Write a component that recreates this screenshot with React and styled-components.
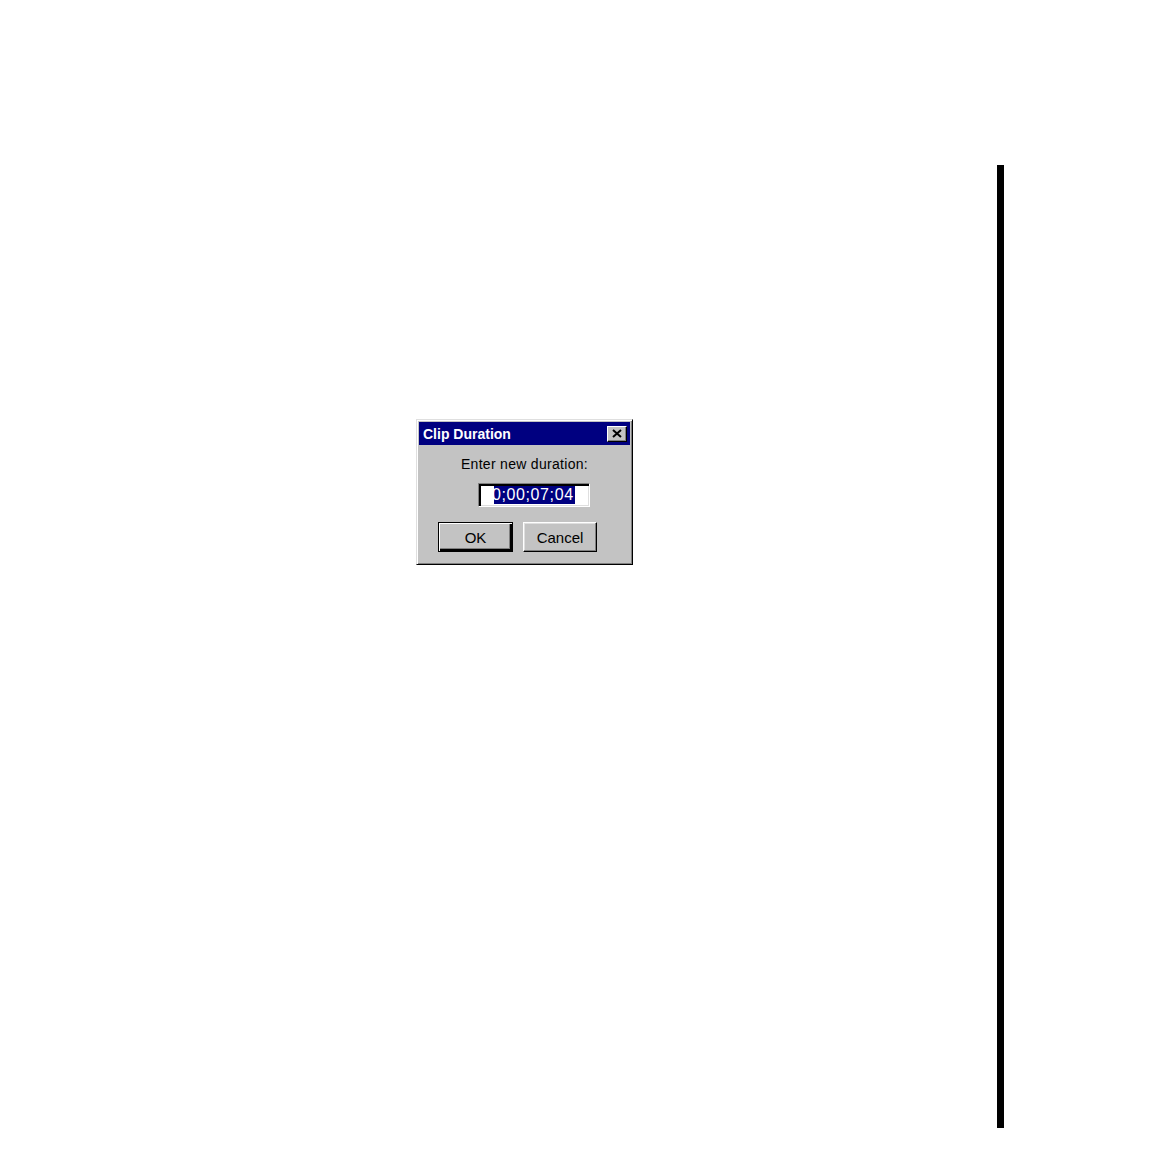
import React from 'react';
import styled, {createGlobalStyle} from 'styled-components';

const GlobalStyle = createGlobalStyle`
    html, body {
        margin: 0;
        padding: 0;
        background: #ffffff;
        font-family: "Liberation Sans", Arial, sans-serif;
    }
`

const Page = styled.div`
    width: 1152px;
    height: 1152px;
    display: flex;
    align-items: flex-start;
    padding-top: 165px;
    box-sizing: border-box;
`

const Content = styled.div`
    width: 997px;
    padding: 254px 0 0 416px;
    box-sizing: border-box;
`

const EdgeBar = styled.div`
    width: 7px;
    height: 963px;
    background: #000000;
`

const Dialog = styled.div`
    width: 217px;
    height: 146px;
    box-sizing: border-box;
    background: #c3c3c3;
    border: 1px solid;
    border-color: #dfdfdf #000000 #000000 #dfdfdf;
    box-shadow: inset 1px 1px 0 #ffffff, inset -1px -1px 0 #808080;
    padding: 2px;
    display: flex;
    flex-direction: column;
`

const TitleBar = styled.div`
    height: 23px;
    background: #000080;
    color: #ffffff;
    font-weight: bold;
    font-size: 14px;
    display: flex;
    align-items: center;
    justify-content: space-between;
    padding: 0 3px 0 4px;
`

const CloseButton = styled.div`
    width: 20px;
    height: 16px;
    box-sizing: border-box;
    background: #c3c3c3;
    border: 1px solid;
    border-color: #ffffff #000000 #000000 #ffffff;
    box-shadow: inset -1px -1px 0 #808080;
    display: flex;
    align-items: center;
    justify-content: center;
`

const Body = styled.div`
    display: flex;
    flex-direction: column;
    padding-top: 10px;
`

const Label = styled.div`
    font-size: 14px;
    letter-spacing: 0.3px;
    color: #000000;
    text-align: center;
    height: 18px;
    line-height: 18px;
`

const Field = styled.div`
    margin: 10px 0 0 59px;
    width: 112px;
    height: 24px;
    box-sizing: border-box;
    background: #ffffff;
    border: 1px solid;
    border-color: #808080 #ffffff #ffffff #808080;
    box-shadow: inset 2px 2px 0 #000000, inset -1px -1px 0 #dfdfdf;
    display: flex;
    align-items: center;
    padding-left: 15px;
`

const FieldClip = styled.div`
    overflow: hidden;
    width: 84px;
    height: 18px;
`

const Selected = styled.span`
    display: inline-block;
    margin-left: -2px;
    padding: 0 1px 0 0;
    height: 18px;
    line-height: 18px;
    background: #000080;
    color: #ffffff;
    font-size: 16px;
    letter-spacing: 0.6px;
`

const ButtonRow = styled.div`
    display: flex;
    gap: 10px;
    margin: 15px 0 0 19px;
`

const Button = styled.div`
    width: ${p => p.$default ? '75px' : '74px'};
    height: 30px;
    box-sizing: border-box;
    background: #c3c3c3;
    border: 1px solid;
    border-color: ${p => p.$default ? '#000000' : '#ffffff #000000 #000000 #ffffff'};
    box-shadow: ${p => p.$default
        ? 'inset 1px 1px 0 #ffffff, inset -2px -2px 0 #000000, inset -3px -3px 0 #808080'
        : 'inset -1px -1px 0 #808080, inset 1px 1px 0 #dfdfdf'};
    font-size: 15px;
    color: #000000;
    display: flex;
    align-items: center;
    justify-content: center;
`

export default function App() {
    return (
        <>
            <GlobalStyle/>
            <Page>
                <Content>
                    <Dialog>
                        <TitleBar>
                            <span>Clip Duration</span>
                            <CloseButton>
                                <svg width="10" height="9" viewBox="0 0 10 9">
                                    <path d="M1 1 L9 8 M9 1 L1 8" stroke="#000" strokeWidth="2"/>
                                </svg>
                            </CloseButton>
                        </TitleBar>
                        <Body>
                            <Label>Enter new duration:</Label>
                            <Field>
                                <FieldClip>
                                    <Selected>0;00;07;04</Selected>
                                </FieldClip>
                            </Field>
                            <ButtonRow>
                                <Button $default>OK</Button>
                                <Button>Cancel</Button>
                            </ButtonRow>
                        </Body>
                    </Dialog>
                </Content>
                <EdgeBar/>
            </Page>
        </>
    );
}
